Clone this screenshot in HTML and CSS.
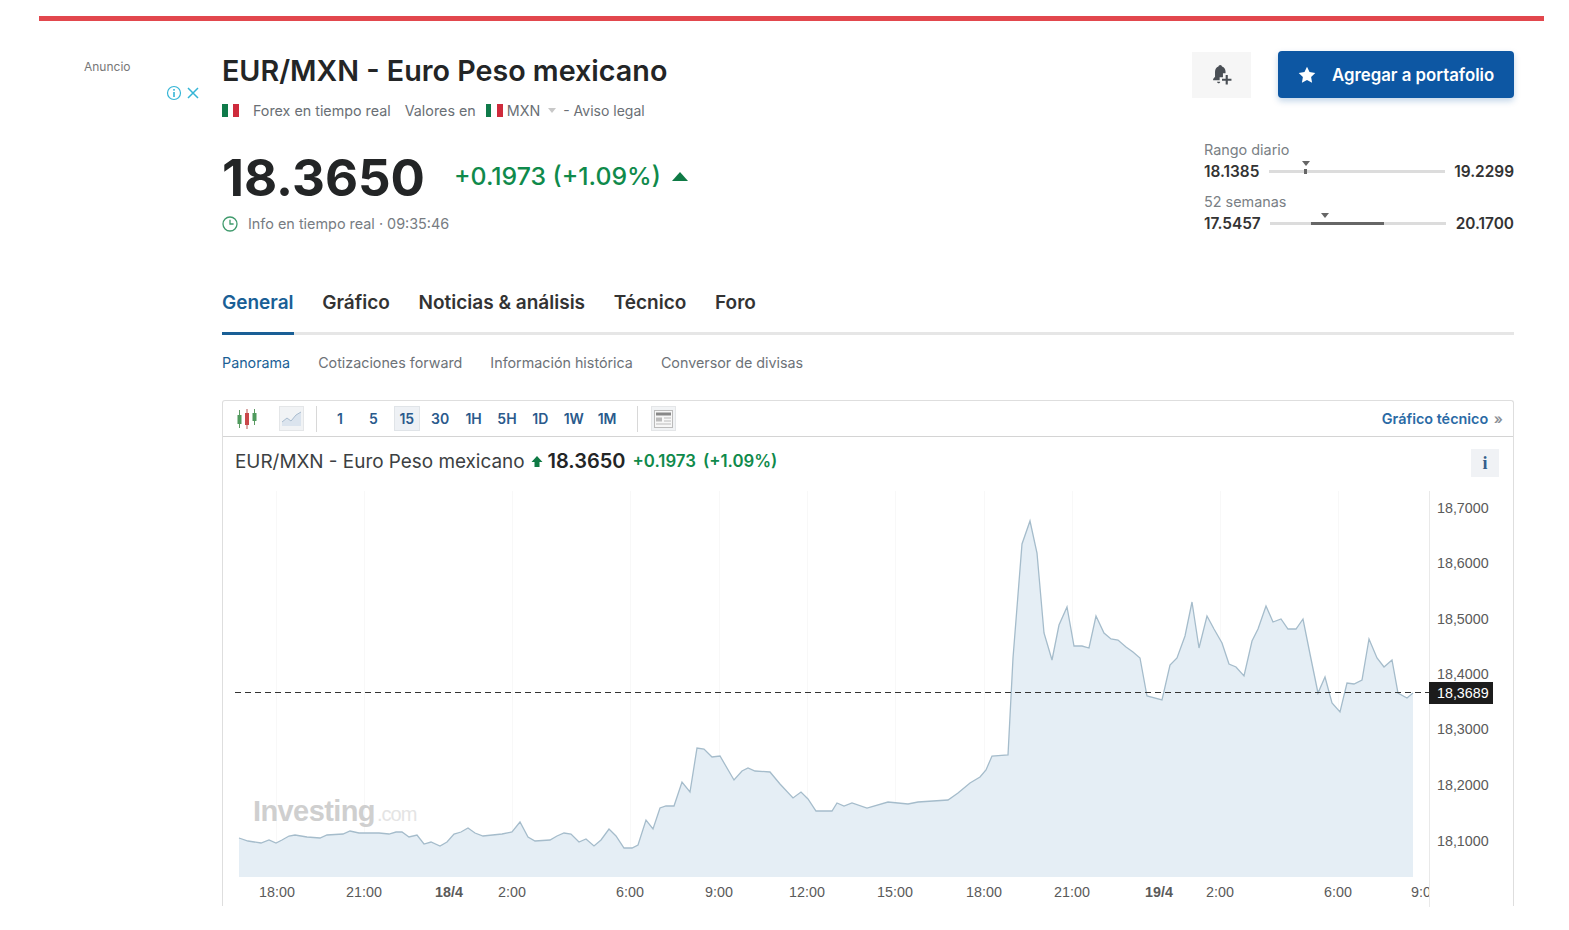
FILE: index.html
```html
<!DOCTYPE html>
<html lang="es">
<head>
    <meta charset="UTF-8">
    <title>EUR/MXN - Euro Peso mexicano</title>
    <link rel="stylesheet" href="styles.css">
</head>
<body>
    <div class="top-bar"></div>
    <div class="layout">
        <aside class="ad">
            <div class="ad-label">Anuncio</div>
            <div class="ad-icons">
                <svg width="16" height="16" viewBox="0 0 16 16"><circle cx="8" cy="8" r="6.5" fill="none" stroke="#35b5d6" stroke-width="1.2"/><rect x="7.2" y="7" width="1.6" height="5" fill="#35b5d6"/><rect x="7.2" y="4" width="1.6" height="1.7" fill="#35b5d6"/></svg>
                <svg width="14" height="14" viewBox="0 0 14 14"><path d="M2 2l10 10M12 2L2 12" stroke="#35b5d6" stroke-width="1.5" fill="none"/></svg>
            </div>
        </aside>

        <main class="content">
            <header class="head">
                <div class="head-left">
                    <h1>EUR/MXN - Euro Peso mexicano</h1>
                    <div class="meta">
                        <span class="flag"><i></i><i></i><i></i></span>
                        <span class="meta-market">Forex en tiempo real</span>
                        <span class="meta-values">Valores en</span>
                        <span class="flag flag-small"><i></i><i></i><i></i></span>
                        <span class="meta-cur">MXN</span>
                        <span class="caret"></span>
                        <span class="meta-legal">- Aviso legal</span>
                    </div>
                    <div class="quote">
                        <span class="price">18.3650</span>
                        <span class="change">+0.1973 (+1.09%)</span>
                        <span class="arrow-up"></span>
                    </div>
                    <div class="realtime">
                        <svg width="16" height="16" viewBox="0 0 16 16"><circle cx="8" cy="8" r="7" fill="none" stroke="#3f9a6c" stroke-width="1.3"/><path d="M8 3.8V8h3.6" fill="none" stroke="#3f9a6c" stroke-width="1.3"/></svg>
                        <span>Info en tiempo real · 09:35:46</span>
                    </div>
                </div>
                <div class="head-right">
                    <div class="actions">
                        <button class="btn-alert">
                            <svg width="26" height="26" viewBox="0 0 22 22"><path d="M9.500 2.500c.9 0 1.400.6 1.500 1.400 2 .7 3 2.300 3 4.400v1.200h-2.200v3.400H9v2.600H3.500v-1.100l1.600-2V8.300c0-2.100 1-3.700 2.900-4.400.1-.8.6-1.400 1.500-1.400zM6.800 16.700H9.500c-.1.8-.6 1.300-1.300 1.300s-1.300-.5-1.400-1.300z" fill="#4a4f55"/><path d="M15 11v8M11 15h8" stroke="#4a4f55" stroke-width="1.800"/></svg>
                        </button>
                        <button class="btn-portfolio">
                            <svg width="18" height="18" viewBox="0 0 18 18"><path d="M9 .8l2.500 5.300 5.800.8-4.200 4 1 5.800L9 14.100l-5.100 2.600 1-5.800-4.200-4 5.800-.8z" fill="#fff"/></svg>
                            <span>Agregar a portafolio</span>
                        </button>
                    </div>
                    <div class="range">
                        <div class="range-title">Rango diario</div>
                        <div class="range-row">
                            <b>18.1385</b>
                            <div class="track"><span class="pin pin-day"></span><span class="dot"></span></div>
                            <b>19.2299</b>
                        </div>
                    </div>
                    <div class="range">
                        <div class="range-title">52 semanas</div>
                        <div class="range-row">
                            <b>17.5457</b>
                            <div class="track"><span class="pin pin-year"></span><span class="fill"></span></div>
                            <b>20.1700</b>
                        </div>
                    </div>
                </div>
            </header>

            <nav class="tabs">
                <a class="tab active">General</a>
                <a class="tab">Gráfico</a>
                <a class="tab">Noticias &amp; análisis</a>
                <a class="tab">Técnico</a>
                <a class="tab">Foro</a>
            </nav>
            <nav class="subtabs">
                <a class="active">Panorama</a>
                <a>Cotizaciones forward</a>
                <a>Información histórica</a>
                <a>Conversor de divisas</a>
            </nav>

            <section class="panel">
                <div class="toolbar">
                    <svg class="ico-candles" width="22" height="22" viewBox="0 0 22 22">
                        <path d="M3.500 2v18" stroke="#5c9a63" stroke-width="1"/><rect x="1.500" y="7" width="4" height="9" fill="#4f9a5d"/>
                        <path d="M11 1v20" stroke="#b5534f" stroke-width="1"/><rect x="9" y="5" width="4" height="12" fill="#c9474a"/>
                        <path d="M18.500 1v16" stroke="#5c9a63" stroke-width="1"/><rect x="16.500" y="5" width="4" height="8" fill="#4f9a5d"/>
                    </svg>
                    <span class="ico-box">
                        <svg width="21" height="17" viewBox="0 0 21 17"><path d="M1 12l5-4 4 3 5-6 5-3v14H1z" fill="#dbe4ee"/><path d="M1 12l5-4 4 3 5-6 5-3" fill="none" stroke="#a9bccf" stroke-width="1"/></svg>
                    </span>
                    <span class="sep"></span>
                    <div class="periods">
                        <button>1</button>
                        <button>5</button>
                        <button class="on">15</button>
                        <button>30</button>
                        <button>1H</button>
                        <button>5H</button>
                        <button>1D</button>
                        <button>1W</button>
                        <button>1M</button>
                    </div>
                    <span class="sep sep-right"></span>
                    <span class="ico-box">
                        <svg width="19" height="18" viewBox="0 0 19 18"><rect x=".5" y=".5" width="18" height="17" fill="#f7f7f7" stroke="#bbb"/><rect x="2" y="2.500" width="15" height="3" fill="#888"/><rect x="2" y="7.500" width="6" height="4" fill="#bbb"/><path d="M10 8h7M10 11h7M2 14h15" stroke="#bbb"/></svg>
                    </span>
                    <a class="tech-link">Gráfico técnico <span>»</span></a>
                </div>
                <div class="chart-head">
                    <div class="chart-title">
                        <span class="chart-name">EUR/MXN - Euro Peso mexicano</span>
                        <svg width="12" height="13" viewBox="0 0 12 13"><path d="M6 1l5.500 6H8.500v5h-5V7H.500z" fill="#0f7a45"/></svg>
                        <b class="chart-price">18.3650</b>
                        <span class="chart-change">+0.1973</span>
                        <span class="chart-change">(+1.09%)</span>
                    </div>
                    <button class="info-btn">i</button>
                </div>
                <!-- coordenadas en px de pagina: x 222-1513, y 486-906 -->
                <svg class="chart" viewBox="222 486 1291 420" width="1291" height="420">
                    <g class="grid">
                        <path d="M276.500 490V876M364.500 490V876M512.500 490V876M630.500 490V876M719.500 490V876M807.500 490V876M895.500 490V876M984.500 490V876M1072.500 490V876M1220.500 490V876M1338.500 490V876"/>
                    </g>
                    <path class="area" d="M239 837L248 840 261 842 269 839 276 842 282 839 289 835 295 834 307 836 320 837 327 834 343 833 350 830 359 832 379 832 389 833 396 831 402 831 409 836 417 834 424 843 431 841 440 845 447 841 454 833 461 831 468 827 475 832 483 835 502 833 512 831 520 821 528 836 535 840 550 839 557 835 564 832 571 833 579 841 586 838 594 845 601 839 609 828 616 835 624 847 632 847 638 844 646 819 653 828 660 807 666 805 674 805 682 781 690 791 697 747 704 748 712 756 720 755 734 779 742 770 748 767 755 770 770 771 780 783 793 797 801 791 808 798 816 810 832 810 837 802 844 805 852 802 867 807 888 801 908 803 918 801 948 799 958 792 970 782 980 776 986 769 992 755 1008 754 1013 657 1022 543 1030 520 1037 552 1044 632 1052 659 1059 624 1067 606 1074 645 1082 645 1089 647 1096 615 1104 632 1111 638 1118 639 1126 646 1133 651 1140 657 1147 695 1162 699 1170 664 1177 657 1185 635 1192 601 1199 647 1207 615 1214 628 1222 642 1229 663 1236 666 1244 675 1252 640 1258 628 1266 605 1273 621 1281 618 1288 628 1296 628 1303 618 1310 653 1318 692 1325 676 1332 702 1340 711 1347 682 1354 683 1362 679 1369 638 1377 657 1384 666 1392 659 1398 692 1407 697 1413 692V876H239Z"/>
                    <polyline class="line" points="239,837 248,840 261,842 269,839 276,842 282,839 289,835 295,834 307,836 320,837 327,834 343,833 350,830 359,832 379,832 389,833 396,831 402,831 409,836 417,834 424,843 431,841 440,845 447,841 454,833 461,831 468,827 475,832 483,835 502,833 512,831 520,821 528,836 535,840 550,839 557,835 564,832 571,833 579,841 586,838 594,845 601,839 609,828 616,835 624,847 632,847 638,844 646,819 653,828 660,807 666,805 674,805 682,781 690,791 697,747 704,748 712,756 720,755 734,779 742,770 748,767 755,770 770,771 780,783 793,797 801,791 808,798 816,810 832,810 837,802 844,805 852,802 867,807 888,801 908,803 918,801 948,799 958,792 970,782 980,776 986,769 992,755 1008,754 1013,657 1022,543 1030,520 1037,552 1044,632 1052,659 1059,624 1067,606 1074,645 1082,645 1089,647 1096,615 1104,632 1111,638 1118,639 1126,646 1133,651 1140,657 1147,695 1162,699 1170,664 1177,657 1185,635 1192,601 1199,647 1207,615 1214,628 1222,642 1229,663 1236,666 1244,675 1252,640 1258,628 1266,605 1273,621 1281,618 1288,628 1296,628 1303,618 1310,653 1318,692 1325,676 1332,702 1340,711 1347,682 1354,683 1362,679 1369,638 1377,657 1384,666 1392,659 1398,692 1407,697 1413,692"/>

                    <text class="wm-big" x="253" y="820">Investing</text>
                    <text class="wm-small" x="377" y="820">.com</text>

                    <path class="axis" d="M1429.500 490V906"/>
                    <path class="crosshair" d="M235 691.500H1429"/>

                    <g class="y-labels">
                        <text x="1437" y="512">18,7000</text>
                        <text x="1437" y="567">18,6000</text>
                        <text x="1437" y="623">18,5000</text>
                        <text x="1437" y="678">18,4000</text>
                        <text x="1437" y="733">18,3000</text>
                        <text x="1437" y="789">18,2000</text>
                        <text x="1437" y="845">18,1000</text>
                    </g>
                    <rect class="last-box" x="1429" y="681" width="64" height="22"/>
                    <text class="last-text" x="1437" y="697">18,3689</text>

                    <g class="x-labels">
                        <text x="277" y="896">18:00</text>
                        <text x="364" y="896">21:00</text>
                        <text class="day" x="449" y="896">18/4</text>
                        <text x="512" y="896">2:00</text>
                        <text x="630" y="896">6:00</text>
                        <text x="719" y="896">9:00</text>
                        <text x="807" y="896">12:00</text>
                        <text x="895" y="896">15:00</text>
                        <text x="984" y="896">18:00</text>
                        <text x="1072" y="896">21:00</text>
                        <text class="day" x="1159" y="896">19/4</text>
                        <text x="1220" y="896">2:00</text>
                        <text x="1338" y="896">6:00</text>
                    </g>
                    <svg x="1400" y="880" width="29" height="24" viewBox="0 0 29 24"><text class="x-cut" x="25" y="16">9:00</text></svg>
                </svg>
            </section>
        </main>
    </div>
</body>
</html>
```

FILE: styles.css
```css
* {
    box-sizing: border-box;
}
body {
    margin: 0;
    background: #fff;
    font-family: Inter, "Noto Sans", sans-serif;
    color: #232526;
    height: 930px;
    overflow: hidden;
}
button {
    font-family: inherit;
    border: none;
    padding: 0;
}
.top-bar {
    height: 5px;
    margin: 16px 25px 0 39px;
    background: #e2474d;
}
.layout {
    display: flex;
    padding-right: 55px;
}

/* columna del anuncio */
.ad {
    width: 222px;
    flex: none;
    padding: 39px 22px 0 84px;
}
.ad-label {
    font-size: 12px;
    line-height: 14px;
    color: #777;
}
.ad-icons {
    display: flex;
    justify-content: flex-end;
    align-items: center;
    gap: 4px;
    margin-top: 11px;
}

.content {
    flex: 1;
    min-width: 0;
}

/* cabecera */
.head {
    display: flex;
    justify-content: space-between;
    height: 234px;
}
.head-left {
    padding-top: 29px;
}
h1 {
    margin: 0;
    font-size: 28.700px;
    line-height: 42px;
    font-weight: 600;
    color: #232526;
}
.meta {
    display: flex;
    align-items: center;
    height: 20px;
    margin-top: 8px;
    font-size: 14.300px;
    color: #6a6f75;
}
.flag {
    display: flex;
    width: 17px;
    height: 13px;
}
.flag i {
    flex: 1;
    background: #fff;
}
.flag i:first-child {
    background: #0f7a4a;
}
.flag i:last-child {
    background: #ce2b3c;
}
.meta-market {
    margin-left: 14px;
}
.meta-values {
    margin-left: 14px;
    margin-right: 10px;
}
.meta-cur {
    margin-left: 4px;
}
.caret {
    width: 0;
    height: 0;
    margin: 1px 0 0 8px;
    border-left: 4px solid transparent;
    border-right: 4px solid transparent;
    border-top: 5px solid #c8c8c8;
}
.meta-legal {
    margin-left: 7px;
    font-size: 14px;
}
.quote {
    display: flex;
    align-items: center;
    height: 62px;
    margin-top: 27px;
}
.price {
    font-size: 51px;
    font-weight: 700;
    line-height: 62px;
    color: #232526;
}
.change {
    margin-left: 29px;
    margin-bottom: 4px;
    font-size: 24.800px;
    font-weight: 500;
    color: #0f8a4b;
}
.arrow-up {
    width: 0;
    height: 0;
    margin-left: 11px;
    margin-bottom: 4px;
    border-left: 8px solid transparent;
    border-right: 8px solid transparent;
    border-bottom: 9px solid #0f7a45;
}
.realtime {
    display: flex;
    align-items: center;
    gap: 10px;
    margin-top: 6px;
    font-size: 14.400px;
    color: #777c82;
}

.head-right {
    width: 322px;
    padding-top: 30px;
}
.actions {
    display: flex;
    justify-content: flex-end;
    gap: 27px;
    height: 47px;
    margin-bottom: 42px;
}
.btn-alert {
    display: flex;
    align-items: center;
    justify-content: center;
    width: 59px;
    height: 46px;
    margin-top: 1px;
    background: #f6f6f6;
}
.btn-portfolio {
    display: flex;
    align-items: center;
    width: 236px;
    height: 47px;
    padding-left: 20px;
    gap: 16px;
    border-radius: 4px;
    background: #0d57a3;
    box-shadow: 0 3px 6px rgba(13, 87, 163, 0.25);
    color: #fff;
    font-size: 16.800px;
    font-weight: 600;
}
.range {
    margin-left: 12px;
    height: 52px;
}
.range-title {
    font-size: 14.400px;
    line-height: 20px;
    color: #7a7f85;
}
.range-row {
    display: flex;
    align-items: center;
    justify-content: space-between;
    height: 22px;
    font-size: 15.400px;
}
.range-row b {
    font-weight: 600;
    color: #333;
}
.track {
    position: relative;
    width: 176px;
    height: 3px;
    background: #dcdcdc;
}
.pin {
    position: absolute;
    top: -9px;
    width: 0;
    height: 0;
    border-left: 4px solid transparent;
    border-right: 4px solid transparent;
    border-top: 5px solid #666;
}
.pin-day {
    left: 33px;
}
.pin-year {
    left: 51px;
}
.dot {
    position: absolute;
    left: 35px;
    top: -1px;
    width: 3px;
    height: 5px;
    background: #666;
}
.fill {
    position: absolute;
    left: 41px;
    width: 73px;
    height: 3px;
    background: #666;
}

/* pestañas */
.tabs {
    display: flex;
    gap: 28.700px;
    height: 80px;
    padding-top: 36px;
    border-bottom: 3px solid #e6e6e6;
}
.tab {
    height: 44px;
    margin-bottom: -3px;
    font-size: 19px;
    line-height: 24px;
    font-weight: 600;
    color: #333;
}
.tab.active {
    color: #1a5f96;
    border-bottom: 3px solid #1a5f96;
}
.subtabs {
    display: flex;
    gap: 28px;
    height: 65px;
    padding-top: 18px;
    font-size: 14.300px;
    line-height: 20px;
    color: #6d7278;
}
.subtabs .active {
    color: #1a5f96;
}

/* panel del grafico */
.panel {
    height: 506px;
    border: 1px solid #dedede;
    border-bottom: none;
    border-radius: 3px 3px 0 0;
}
.toolbar {
    display: flex;
    align-items: center;
    height: 36px;
    padding-left: 13px;
    border-bottom: 1px solid #d4d4d4;
}
.ico-candles {
    flex: none;
}
.ico-box {
    display: flex;
    align-items: center;
    justify-content: center;
    width: 25px;
    height: 25px;
    margin-left: 21px;
    background: #f1f3f5;
    border: 1px solid #e4e6e8;
}
.sep {
    width: 1px;
    height: 26px;
    margin-left: 12px;
    background: #d8d8d8;
}
.sep-right {
    margin-left: 17px;
}
.sep-right + .ico-box {
    margin-left: 13px;
}
.periods {
    display: flex;
    gap: 7.400px;
    margin-left: 10px;
}
.periods button {
    width: 26px;
    height: 25px;
    background: none;
    font-size: 14px;
    font-weight: 600;
    color: #2a5a8c;
}
.periods .on {
    background: #eef1f5;
    border: 1px solid #e0e4e8;
}
.tech-link {
    margin-left: auto;
    padding-right: 10px;
    font-size: 14.400px;
    font-weight: 600;
    color: #2a6aa5;
}
.tech-link span {
    margin-left: 2px;
    color: #8a8f95;
}
.chart-head {
    display: flex;
    justify-content: space-between;
    height: 50px;
    padding: 12px 14px 0 12px;
}
.chart-title {
    display: flex;
    align-items: center;
    height: 24px;
    font-size: 18.900px;
}
.chart-name {
    color: #3c3f42;
    margin-right: 6px;
}
.chart-price {
    margin-left: 5px;
    font-size: 20px;
    font-weight: 600;
    color: #232526;
}
.chart-change {
    margin-left: 7px;
    font-size: 16.800px;
    font-weight: 600;
    color: #0f8a4b;
}
.info-btn {
    width: 28px;
    height: 28px;
    background: #f0f2f5;
    font-family: "Liberation Serif", serif;
    font-size: 18px;
    font-weight: 700;
    color: #345f8c;
}
.chart {
    display: block;
    margin-left: -1px;
}
.grid path {
    stroke: #f8f8f8;
    fill: none;
}
.area {
    fill: #e5eef5;
}
.line {
    fill: none;
    stroke: #a5bccb;
    stroke-width: 1.300;
}
.axis {
    stroke: #e9e9e9;
}
.crosshair {
    stroke: #333;
    stroke-dasharray: 6 4;
    fill: none;
}
.chart text {
    font-family: "Liberation Sans", Arial, sans-serif;
    font-size: 14.300px;
    fill: #5a5a5a;
}
.x-labels text,
.chart .x-cut {
    text-anchor: middle;
}
.chart .day {
    font-weight: 700;
}
.last-box {
    fill: #1c1c1c;
}
.chart .last-text {
    fill: #fff;
}
.chart .wm-big {
    font-size: 29px;
    font-weight: 700;
    fill: #cfcfcf;
    letter-spacing: -0.6px;
}
.chart .wm-small {
    font-size: 20px;
    fill: #e4e4e4;
    letter-spacing: -1px;
}
```
